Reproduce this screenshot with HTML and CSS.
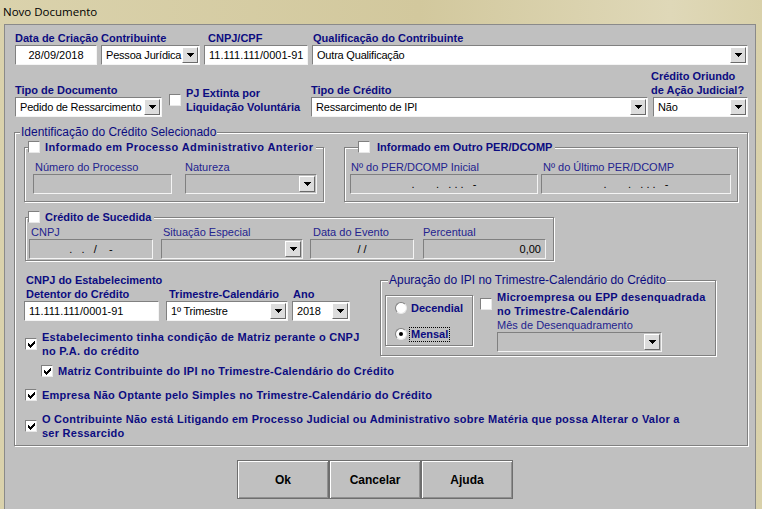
FILE: index.html
```html
<!DOCTYPE html>
<html lang="pt-BR">
<head>
<meta charset="utf-8">
<title>Novo Documento</title>
<link rel="stylesheet" href="styles.css">
</head>
<body>
<div class="window">
  <div class="titlebar">Novo Documento</div>
  <div class="client">
    <div class="row row1">
      <div class="field w-date">
        <div class="lbl">Data de Criação</div>
        <div class="box center">28/09/2018</div>
      </div>
      <div class="field w-contrib">
        <div class="lbl">Contribuinte</div>
        <div class="box select"><span class="val">Pessoa Jurídica</span><span class="dd"><svg width="7" height="4" viewBox="0 0 7 4"><path d="M0 0h7v1h-1v1h-1v1h-1v1h-1v-1h-1v-1h-1v-1h-1z"/></svg></span></div>
      </div>
      <div class="field w-cnpj">
        <div class="lbl pl4">CNPJ/CPF</div>
        <div class="box">11.111.111/0001-91</div>
      </div>
      <div class="field w-qual">
        <div class="lbl pl1">Qualificação do Contribuinte</div>
        <div class="box select"><span class="val">Outra Qualificação</span><span class="dd"><svg width="7" height="4" viewBox="0 0 7 4"><path d="M0 0h7v1h-1v1h-1v1h-1v1h-1v-1h-1v-1h-1v-1h-1z"/></svg></span></div>
      </div>
    </div>

    <div class="row row2">
      <div class="field w-tipodoc">
        <div class="lbl">Tipo de Documento</div>
        <div class="box select"><span class="val">Pedido de Ressarcimento</span><span class="dd"><svg width="7" height="4" viewBox="0 0 7 4"><path d="M0 0h7v1h-1v1h-1v1h-1v1h-1v-1h-1v-1h-1v-1h-1z"/></svg></span></div>
      </div>
      <div class="cbline pj">
        <span class="cb"></span>
        <span class="lbl">PJ Extinta por<br>Liquidação Voluntária</span>
      </div>
      <div class="field w-tipocred">
        <div class="lbl">Tipo de Crédito</div>
        <div class="box select"><span class="val">Ressarcimento de IPI</span><span class="dd"><svg width="7" height="4" viewBox="0 0 7 4"><path d="M0 0h7v1h-1v1h-1v1h-1v1h-1v-1h-1v-1h-1v-1h-1z"/></svg></span></div>
      </div>
      <div class="field w-oriundo">
        <div class="lbl">Crédito Oriundo<br>de Ação Judicial?</div>
        <div class="box select sel-oriundo"><span class="val">Não</span><span class="dd"><svg width="7" height="4" viewBox="0 0 7 4"><path d="M0 0h7v1h-1v1h-1v1h-1v1h-1v-1h-1v-1h-1v-1h-1z"/></svg></span></div>
      </div>
    </div>

    <div class="group g-ident">
      <div class="legend lg-text lg-ident">Identificação do Crédito Selecionado</div>

      <div class="row subframes">
        <div class="group g-proc">
          <div class="legend lg-cb"><span class="cb"></span><span class="lbl wide">Informado em Processo Administrativo Anterior</span></div>
          <div class="row fields">
            <div class="field w-nproc">
              <div class="slbl pl2">Número do Processo</div>
              <div class="box dis"></div>
            </div>
            <div class="field w-nat">
              <div class="slbl">Natureza</div>
              <div class="box dis select"><span class="val"></span><span class="dd"><svg width="7" height="4" viewBox="0 0 7 4"><path d="M0 0h7v1h-1v1h-1v1h-1v1h-1v-1h-1v-1h-1v-1h-1z"/></svg></span></div>
            </div>
          </div>
        </div>

        <div class="group g-per">
          <div class="legend lg-cb"><span class="cb"></span><span class="lbl">Informado em Outro PER/DCOMP</span></div>
          <div class="row fields">
            <div class="field w-per1">
              <div class="slbl pl1">Nº do PER/DCOMP Inicial</div>
              <div class="box dis center mask">.       .   . . .   -</div>
            </div>
            <div class="field w-per2">
              <div class="slbl pl2">Nº do Último PER/DCOMP</div>
              <div class="box dis center mask">.       .   . . .   -</div>
            </div>
          </div>
        </div>
      </div>

      <div class="group g-suc">
        <div class="legend lg-cb"><span class="cb"></span><span class="lbl">Crédito de Sucedida</span></div>
        <div class="row fields">
          <div class="field w-sc1">
            <div class="slbl pl2">CNPJ</div>
            <div class="box dis center mask">.   .   /    -</div>
          </div>
          <div class="field w-sc2">
            <div class="slbl pl2">Situação Especial</div>
            <div class="box dis select"><span class="val"></span><span class="dd"><svg width="7" height="4" viewBox="0 0 7 4"><path d="M0 0h7v1h-1v1h-1v1h-1v1h-1v-1h-1v-1h-1v-1h-1z"/></svg></span></div>
          </div>
          <div class="field w-sc3">
            <div class="slbl pl3">Data do Evento</div>
            <div class="box dis center mask">/ /</div>
          </div>
          <div class="field w-sc4">
            <div class="slbl">Percentual</div>
            <div class="box dis right">0,00</div>
          </div>
        </div>
      </div>

      <div class="bottom">
        <div class="leftcol">
          <div class="row estab">
            <div class="field w-det">
              <div class="lbl pl2">CNPJ do Estabelecimento<br>Detentor do Crédito</div>
              <div class="box">11.111.111/0001-91</div>
            </div>
            <div class="field w-tri">
              <div class="lbl pl3">Trimestre-Calendário</div>
              <div class="box select"><span class="val">1º Trimestre</span><span class="dd"><svg width="7" height="4" viewBox="0 0 7 4"><path d="M0 0h7v1h-1v1h-1v1h-1v1h-1v-1h-1v-1h-1v-1h-1z"/></svg></span></div>
            </div>
            <div class="field w-ano">
              <div class="lbl pl1">Ano</div>
              <div class="box select"><span class="val">2018</span><span class="dd"><svg width="7" height="4" viewBox="0 0 7 4"><path d="M0 0h7v1h-1v1h-1v1h-1v1h-1v-1h-1v-1h-1v-1h-1z"/></svg></span></div>
            </div>
          </div>
          <div class="cbline cb-estab">
            <span class="cb"><svg width="7" height="7" viewBox="0 0 7 7"><path d="M6 0h1v1h-1zM5 1h2v1h-2zM0 2h1v1h-1zM4 2h3v1h-3zM0 3h2v1h-2zM3 3h3v1h-3zM0 4h5v1h-5zM1 5h3v1h-3zM2 6h1v1h-1z"/></svg></span>
            <span class="lbl sp">Estabelecimento tinha condição de Matriz perante o CNPJ<br>no P.A. do crédito</span>
          </div>
        </div>

        <div class="group g-apu">
          <div class="legend lg-text lg-apu">Apuração do IPI no Trimestre-Calendário do Crédito</div>
          <div class="apu-body">
            <div class="group radiobox">
              <div class="rrow"><span class="rb"></span><span class="lbl rtxt">Decendial</span></div>
              <div class="rrow"><span class="rb on"></span><span class="lbl rtxt focus">Mensal</span></div>
            </div>
            <div class="apu-right">
              <div class="cbline">
                <span class="cb"></span>
                <span class="lbl sp">Microempresa ou EPP desenquadrada<br>no Trimestre-Calendário</span>
              </div>
              <div class="slbl mes">Mês de Desenquadramento</div>
              <div class="box dis select sel-mes"><span class="val"></span><span class="dd"><svg width="7" height="4" viewBox="0 0 7 4"><path d="M0 0h7v1h-1v1h-1v1h-1v1h-1v-1h-1v-1h-1v-1h-1z"/></svg></span></div>
            </div>
          </div>
        </div>
      </div>

      <div class="cbline cb-matriz">
        <span class="cb"><svg width="7" height="7" viewBox="0 0 7 7"><path d="M6 0h1v1h-1zM5 1h2v1h-2zM0 2h1v1h-1zM4 2h3v1h-3zM0 3h2v1h-2zM3 3h3v1h-3zM0 4h5v1h-5zM1 5h3v1h-3zM2 6h1v1h-1z"/></svg></span>
        <span class="lbl sp">Matriz Contribuinte do IPI no Trimestre-Calendário do Crédito</span>
      </div>
      <div class="cbline cb-empresa">
        <span class="cb"><svg width="7" height="7" viewBox="0 0 7 7"><path d="M6 0h1v1h-1zM5 1h2v1h-2zM0 2h1v1h-1zM4 2h3v1h-3zM0 3h2v1h-2zM3 3h3v1h-3zM0 4h5v1h-5zM1 5h3v1h-3zM2 6h1v1h-1z"/></svg></span>
        <span class="lbl sp">Empresa Não Optante pelo Simples no Trimestre-Calendário do Crédito</span>
      </div>
      <div class="cbline cb-litig">
        <span class="cb"><svg width="7" height="7" viewBox="0 0 7 7"><path d="M6 0h1v1h-1zM5 1h2v1h-2zM0 2h1v1h-1zM4 2h3v1h-3zM0 3h2v1h-2zM3 3h3v1h-3zM0 4h5v1h-5zM1 5h3v1h-3zM2 6h1v1h-1z"/></svg></span>
        <span class="lbl sp">O Contribuinte Não está Litigando em Processo Judicial ou Administrativo sobre Matéria que possa Alterar o Valor a<br>ser Ressarcido</span>
      </div>
    </div>

    <div class="buttons">
      <div class="btn">Ok</div>
      <div class="btn">Cancelar</div>
      <div class="btn">Ajuda</div>
    </div>
  </div>
</div>
</body>
</html>
```

FILE: styles.css
```css
* { box-sizing: border-box; }
html, body { margin: 0; padding: 0; }
body {
  width: 762px;
  height: 509px;
  overflow: hidden;
  background: #d8cfa7;
  font-family: "Liberation Sans", Arial, sans-serif;
  font-size: 11px;
  color: #000;
}
.window {
  width: 762px;
  height: 509px;
  display: flex;
  flex-direction: column;
  background: linear-gradient(90deg, #dad2ac 0%, #d2c89d 55%, #dfd8b8 88%, #d9d1aa 100%);
}
.titlebar {
  height: 24px;
  flex: none;
  padding: 3px 0 0 3px;
  font-family: "Open Sans", "Noto Sans", sans-serif;
  font-size: 11.5px;
  line-height: 17px;
  color: #000;
}
.client {
  flex: 1;
  margin: 0 6px 0 4px;
  border: 1px solid #8a8a8a;
  border-bottom: 0;
  background: #c0c0c0;
  padding: 6px 0 0 9px;
}

.row { display: flex; align-items: flex-end; }
.field { display: flex; flex-direction: column; flex: none; }
.lbl {
  font-weight: bold;
  color: #0c0c80;
  line-height: 14px;
  white-space: nowrap;
}
.lbl.sp { letter-spacing: 0.25px; }
.lbl.wide { letter-spacing: 0.4px; }
.slbl {
  color: #23238f;
  line-height: 14px;
  white-space: nowrap;
}
.pl1 { padding-left: 1px; }
.pl2 { padding-left: 2px; }
.pl3 { padding-left: 3px; }
.pl4 { padding-left: 4px; }

.box {
  height: 20px;
  background: #fff;
  border: 1px solid;
  border-color: #808080 #f4f4f4 #f4f4f4 #808080;
  line-height: 18px;
  padding: 0 4px;
  white-space: nowrap;
  overflow: hidden;
  color: #000;
}
.box.dis { background: #c0c0c0; }
.box.center { text-align: center; }
.box.right { text-align: right; }
.mask { white-space: pre; }
.select { display: flex; padding: 0 1px 0 4px; }
.select .val { flex: 1; overflow: hidden; letter-spacing: -0.2px; }
.dd {
  flex: none;
  width: 16px;
  height: 16px;
  margin-top: 1px;
  background: #dcdcdc;
  border: 1px solid;
  border-color: #fff #6a6a6a #6a6a6a #fff;
  display: flex;
  align-items: center;
  justify-content: center;
}
.dd svg { display: block; fill: #000; }

.cb {
  flex: none;
  width: 12px;
  height: 12px;
  background: #fff;
  border: 1px solid;
  border-color: #808080 #e8e8e8 #e8e8e8 #808080;
  display: flex;
  align-items: center;
  justify-content: center;
}
.cb svg { display: block; fill: #000; }
.rb {
  flex: none;
  width: 12px;
  height: 12px;
  border-radius: 50%;
  background: #fff;
  border: 1px solid;
  border-color: #808080 #e8e8e8 #e8e8e8 #808080;
  display: flex;
  align-items: center;
  justify-content: center;
}
.rb.on::after {
  content: "";
  width: 4px;
  height: 4px;
  border-radius: 50%;
  background: #000;
}
.cbline { display: flex; align-items: center; gap: 5px; }

/* row 1 */
.row1 { margin-left: 1px; }
.w-date { width: 82px; }
.w-contrib { width: 99px; margin-left: 4px; }
.w-cnpj { width: 104px; margin-left: 4px; }
.w-qual { width: 436px; margin-left: 4px; }

/* row 2 */
.row2 { margin: 4px 0 0 1px; }
.w-tipodoc { width: 147px; }
.pj { width: 142px; margin: 0 0 3px 7px; align-self: flex-end; }
.w-tipocred { width: 337px; }
.w-oriundo { width: 97px; margin-left: 3px; }
.sel-oriundo { margin-left: 2px; width: 95px; }

/* group boxes */
.group {
  flex: none;
  border: 1px solid #808080;
  box-shadow: inset 1px 1px 0 #fff, 1px 1px 0 #fff;
}
.legend {
  display: flex;
  align-items: center;
  width: max-content;
  height: 14px;
  line-height: 14px;
  margin-top: -8px;
  background: #c0c0c0;
}
.lg-text {
  font-size: 12px;
  color: #0c0c80;
  padding: 0 1px;
}
.lg-cb { gap: 5px; padding-right: 3px; }

.g-ident { width: 734px; margin-top: 15px; padding-bottom: 5px; }
.lg-ident { margin-left: 5px; }

.subframes { margin: 8px 0 0 9px; align-items: flex-start; }
.fields { margin-top: 6px; }
.g-proc { width: 300px; padding-bottom: 7px; }
.g-proc .legend { margin-left: 3px; }
.g-proc .fields { margin-left: 8px; }
.w-nproc { width: 139px; }
.w-nat { width: 132px; margin-left: 13px; }

.g-per { width: 394px; margin-left: 20px; padding-bottom: 7px; }
.g-per .legend { margin-left: 13px; gap: 7px; }
.g-per .fields { margin-left: 5px; }
.w-per1 { width: 188px; }
.w-per2 { width: 190px; margin-left: 3px; }

.g-suc { width: 529px; margin: 15px 0 0 10px; padding-bottom: 1px; }
.g-suc .legend { margin-left: 2px; }
.g-suc .fields { margin: 1px 0 0 3px; }
.w-sc1 { width: 124px; }
.w-sc2 { width: 142px; margin-left: 8px; }
.w-sc3 { width: 104px; margin-left: 7px; }
.w-sc4 { width: 123px; margin-left: 9px; }

/* bottom block */
.bottom { display: flex; align-items: flex-start; margin: 12px 0 0 9px; }
.leftcol { width: 356px; flex: none; }
.w-det { width: 135px; }
.w-tri { width: 122px; margin-left: 7px; }
.w-ano { width: 58px; margin-left: 4px; }
.cb-estab { margin: 9px 0 0 1px; }

.g-apu { width: 336px; margin-top: 7px; padding-bottom: 3px; }
.lg-apu { margin-left: 7px; }
.apu-body { display: flex; align-items: flex-start; }
.radiobox {
  width: 88px;
  height: 51px;
  margin: 8px 0 0 4px;
  padding: 5px 0 0 9px;
}
.rrow { display: flex; align-items: center; height: 14px; }
.rrow + .rrow { margin-top: 12px; }
.rtxt {
  margin-left: 2px;
  border: 1px dotted transparent;
  padding: 0 1px;
  line-height: 13px;
}
.rtxt.focus { border-color: #000; }
.apu-right { margin: 3px 0 0 7px; }
.mes { margin-left: 17px; }
.sel-mes { margin-left: 17px; width: 165px; }

.cb-matriz { margin: 6px 0 0 26px; }
.cb-empresa { margin: 10px 0 0 10px; }
.cb-litig { margin: 10px 0 0 10px; }

/* buttons */
.buttons { display: flex; margin: 14px 0 0 223px; }
.btn {
  width: 92px;
  height: 39px;
  display: flex;
  align-items: center;
  justify-content: center;
  font-size: 12px;
  font-weight: bold;
  color: #000;
  background: #c0c0c0;
  border: 1px solid #6e6e6e;
  box-shadow: inset 1px 1px 0 #fff, inset -1px -1px 0 #909090;
}
```
